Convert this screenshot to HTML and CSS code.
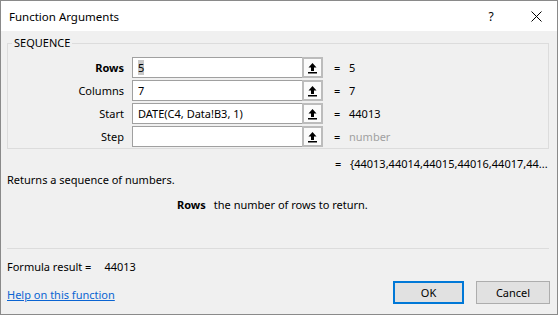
FILE: index.html
```html
<!DOCTYPE html>
<html lang="en">
<head>
    <meta charset="UTF-8">
    <title>Function Arguments</title>
    <link rel="stylesheet" href="styles.css">
</head>
<body>
    <div class="dialog">
        <div class="titlebar">
            <span class="title">Function Arguments</span>
            <span class="help">?</span>
            <span class="close">
                <svg width="11" height="11" viewBox="0 0 11 11"><path d="M0.5 0.5 L10.5 10.5 M10.5 0.5 L0.5 10.5" stroke="#000" stroke-width="1" fill="none"/></svg>
            </span>
        </div>

        <div class="content">
            <fieldset class="group">
                <legend>SEQUENCE</legend>

                <div class="arg-row">
                    <label class="arg-label bold">Rows</label>
                    <div class="arg-input"><span class="sel">5</span></div>
                    <button class="collapse" type="button">
                        <svg width="11" height="12" viewBox="0 0 11 12"><path d="M5.5 1 L9.5 5.5 L7 5.5 L7 9 L4 9 L4 5.5 L1.5 5.5 Z" fill="#000"/><rect x="1" y="10" width="9" height="1.5" fill="#000"/></svg>
                    </button>
                    <span class="eq">=</span>
                    <span class="arg-value">5</span>
                </div>

                <div class="arg-row">
                    <label class="arg-label">Columns</label>
                    <div class="arg-input">7</div>
                    <button class="collapse" type="button">
                        <svg width="11" height="12" viewBox="0 0 11 12"><path d="M5.5 1 L9.5 5.5 L7 5.5 L7 9 L4 9 L4 5.5 L1.5 5.5 Z" fill="#000"/><rect x="1" y="10" width="9" height="1.5" fill="#000"/></svg>
                    </button>
                    <span class="eq">=</span>
                    <span class="arg-value">7</span>
                </div>

                <div class="arg-row">
                    <label class="arg-label">Start</label>
                    <div class="arg-input">DATE(C4, Data!B3, 1)</div>
                    <button class="collapse" type="button">
                        <svg width="11" height="12" viewBox="0 0 11 12"><path d="M5.5 1 L9.5 5.5 L7 5.5 L7 9 L4 9 L4 5.5 L1.5 5.5 Z" fill="#000"/><rect x="1" y="10" width="9" height="1.5" fill="#000"/></svg>
                    </button>
                    <span class="eq">=</span>
                    <span class="arg-value">44013</span>
                </div>

                <div class="arg-row">
                    <label class="arg-label">Step</label>
                    <div class="arg-input"></div>
                    <button class="collapse" type="button">
                        <svg width="11" height="12" viewBox="0 0 11 12"><path d="M5.5 1 L9.5 5.5 L7 5.5 L7 9 L4 9 L4 5.5 L1.5 5.5 Z" fill="#000"/><rect x="1" y="10" width="9" height="1.5" fill="#000"/></svg>
                    </button>
                    <span class="eq">=</span>
                    <span class="arg-value muted">number</span>
                </div>
            </fieldset>

            <div class="result-row">
                <span class="eq">=</span>
                <span class="arg-value">{44013,44014,44015,44016,44017,44...</span>
            </div>

            <p class="description">Returns a sequence of numbers.</p>
            <p class="arg-help"><strong>Rows</strong><span>the number of rows to return.</span></p>

            <hr class="divider">

            <p class="formula">Formula result =<span>44013</span></p>

            <div class="footer">
                <a href="#" class="help-link">Help on this function</a>
                <div class="buttons">
                    <button class="btn default" type="button">OK</button>
                    <button class="btn" type="button">Cancel</button>
                </div>
            </div>
        </div>
    </div>
</body>
</html>
```
FILE: styles.css
```css
:root {
    --face: #f0f0f0;
    --frame: #8a8a8a;
    --edit-border: #a0a0a0;
    --group-border: #dcdcdc;
    --link: #0a64d2;
    --accent: #0078d7;
}

* {
    margin: 0;
    padding: 0;
    box-sizing: border-box;
}

body {
    font-family: 'Noto Sans', sans-serif;
    font-size: 11px;
    color: #000;
    background: var(--face);
}

.dialog {
    width: 558px;
    height: 315px;
    border: 1px solid var(--frame);
    background: var(--face);
}

/* title bar */
.titlebar {
    height: 30px;
    background: #fff;
    display: flex;
    align-items: center;
    padding-left: 8px;
}

.title {
    flex: 1;
    font-size: 11.5px;
}

.help {
    width: 52px;
    text-align: center;
    font-size: 12px;
}

.close {
    width: 38px;
    display: flex;
    justify-content: center;
    margin-right: 2px;
}

/* body */
.content {
    padding: 4px 7px 0 6px;
}

.group {
    border: 1px solid var(--group-border);
    padding: 6px 0 1px 0;
    margin-right: 1px;
}

.group legend {
    margin-left: 4px;
    padding: 0 2px;
    line-height: 16px;
}

.arg-row {
    display: flex;
    align-items: center;
    height: 21px;
    margin-bottom: 2px;
}

.arg-row:last-child {
    margin-bottom: 0;
}

.arg-label {
    width: 116px;
    text-align: right;
    margin-right: 8px;
}

.bold {
    font-weight: 700;
}

.arg-input {
    width: 170px;
    height: 21px;
    background: #fff;
    border: 1px solid var(--edit-border);
    border-right: none;
    padding: 0 5px;
    line-height: 19px;
    white-space: nowrap;
    overflow: hidden;
}

.sel {
    background: #c8c8c8;
}

.collapse {
    width: 21px;
    height: 21px;
    border: 2px solid #bcbcbc;
    background: #fbfbfb;
    display: flex;
    align-items: center;
    justify-content: center;
}

.eq {
    margin-left: 11px;
    width: 15px;
}

.muted {
    color: #a0a0a0;
}

.result-row {
    display: flex;
    align-items: center;
    height: 16px;
    margin-top: 6px;
    padding-left: 317px;
}

.description {
    margin-top: 1px;
    line-height: 16px;
}

.arg-help {
    margin-top: 9px;
    padding-left: 170px;
    line-height: 16px;
}

.arg-help span {
    margin-left: 8px;
}

.divider {
    border: none;
    border-top: 1px solid var(--group-border);
    margin-top: 35px;
    margin-right: 1px;
}

.formula {
    margin-top: 10px;
    line-height: 16px;
}

.formula span {
    margin-left: 13px;
}

.footer {
    display: flex;
    justify-content: space-between;
    align-items: center;
    margin-top: 6px;
}

.help-link {
    color: var(--link);
    text-decoration: underline;
    line-height: 16px;
    margin-top: 4px;
}

.buttons {
    display: flex;
    gap: 12px;
}

.btn {
    width: 74px;
    height: 23px;
    font-family: 'Noto Sans', sans-serif;
    font-size: 11px;
    background: #e1e1e1;
    border: 1px solid #adadad;
}

.btn.default {
    width: 71px;
    border: 2px solid var(--accent);
}
```
